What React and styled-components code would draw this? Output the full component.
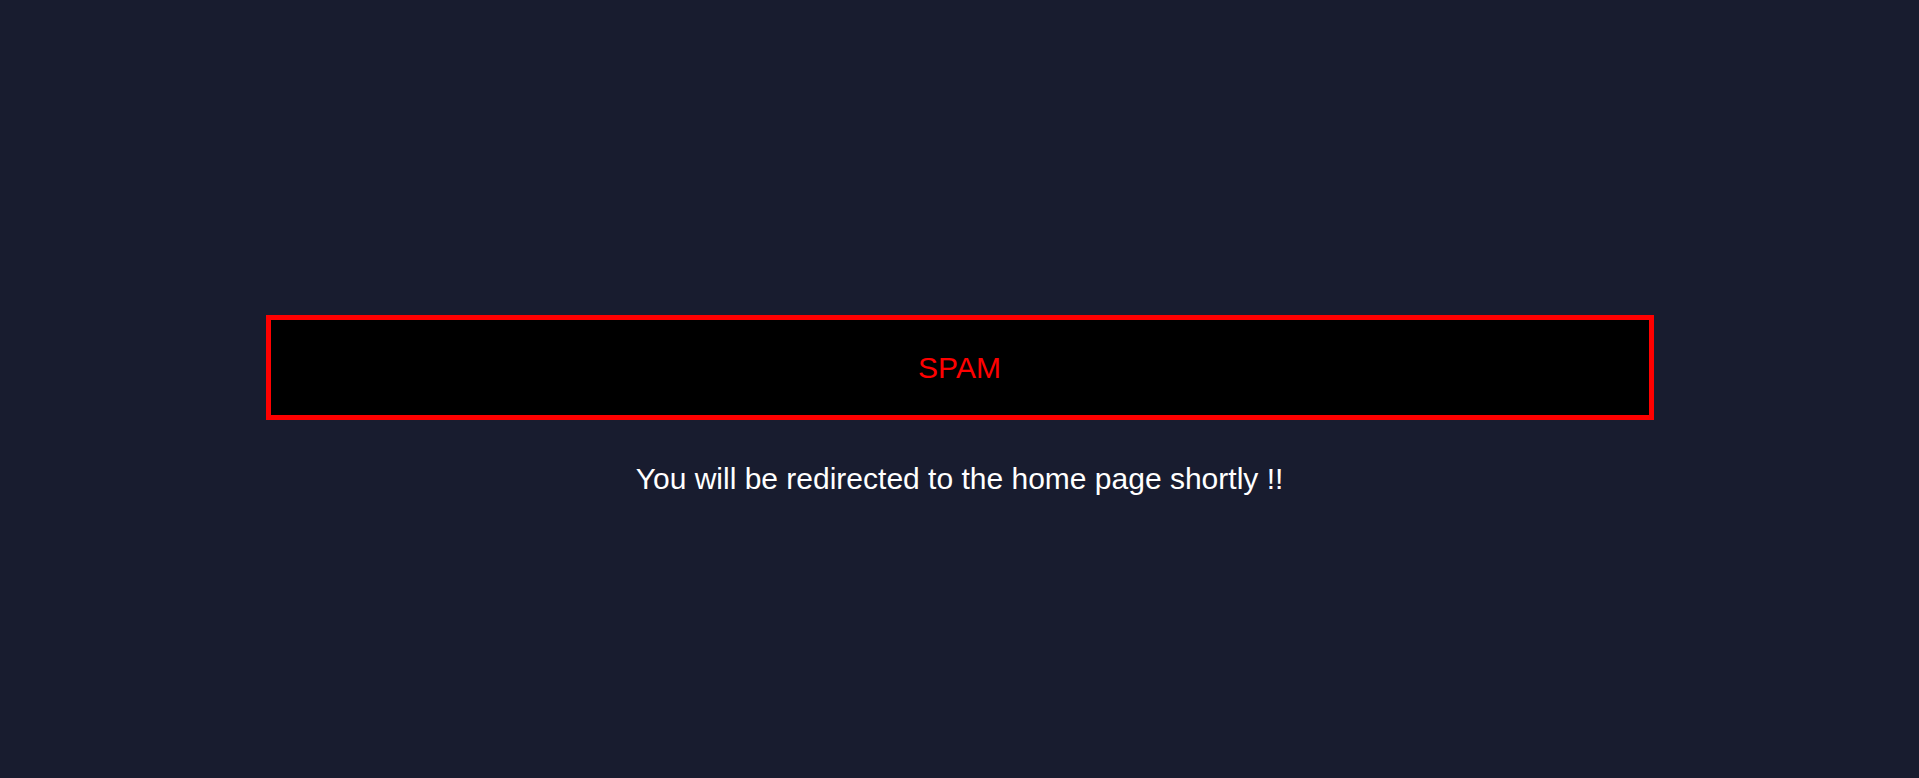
import React from 'react';
import styled, { createGlobalStyle } from 'styled-components';

const GlobalStyle = createGlobalStyle`
  html, body {
    margin: 0;
    padding: 0;
    background: #181c2f;
  }
`;

const Page = styled.div`
  box-sizing: border-box;
  min-height: 100vh;
  padding-top: 315px;
  display: flex;
  flex-direction: column;
  align-items: center;
  font-family: "Liberation Sans", Arial, Helvetica, sans-serif;
`;

const Banner = styled.div`
  box-sizing: border-box;
  width: 1388px;
  height: 105px;
  background: #000;
  border: 5px solid #ff0000;
  display: flex;
  align-items: center;
  justify-content: center;
  color: #ff0000;
  font-size: 30px;
`;

const Message = styled.p`
  margin: 42px 0 0;
  color: #fff;
  font-size: 30px;
  line-height: 34px;
`;

const App = () => {
  return (
    <React.Fragment>
      <GlobalStyle />
      <Page>
        <Banner>SPAM</Banner>
        <Message>You will be redirected to the home page shortly !!</Message>
      </Page>
    </React.Fragment>
  );
};

export default App;
